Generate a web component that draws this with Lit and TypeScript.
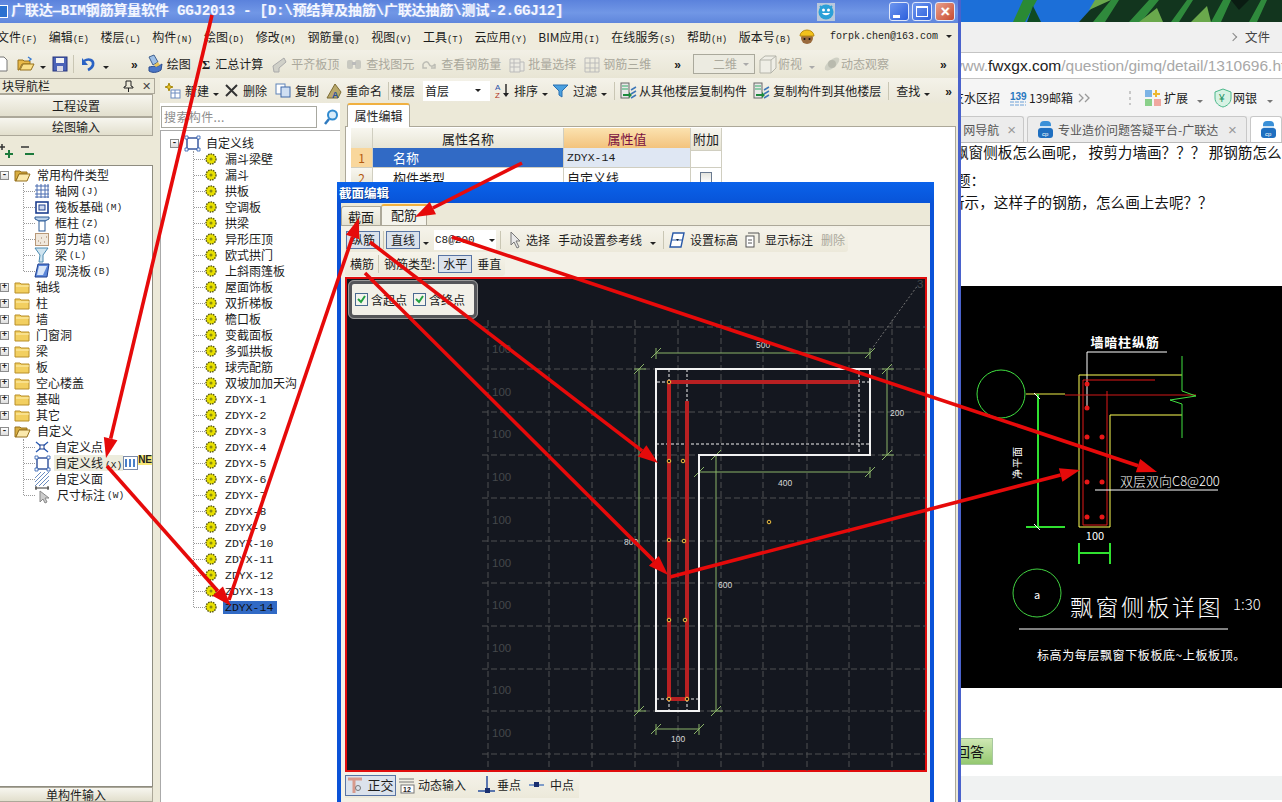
import { LitElement, html, svg, css } from 'lit';
import { customElement } from 'lit/decorators.js';

type Seg = [number, number, number, number];

// little svg wrapper so the icons stay short
const ic = (w: number, h: number, body: unknown) => html`<svg class="ic" width=${w} height=${h} viewBox="0 0 ${w} ${h}">${body}</svg>`;

const caret = html`<span class="caret"></span>`;
const more = html`<span class="more">»</span>`;

const icons = {
  doc: ic(13, 16, svg`<path d="M1 1h8l3 3v11H1z" fill="#fff" stroke="#777"/>`),
  folder: ic(18, 16, svg`<path d="M1 14V4h5l1 1h6v3H5l-3 6z" fill="#e9b949" stroke="#96701c"/><path d="M3 14l3-6h11l-3 6z" fill="#fbe08a" stroke="#96701c"/><path d="M11 1l3 2-2 2" fill="none" stroke="#3a7bd0" stroke-width="1.4"/>`),
  save: ic(16, 16, svg`<rect x="1" y="1" width="14" height="14" fill="#4b63b8" stroke="#26357c"/><rect x="4" y="2" width="8" height="5" fill="#f3f3f3"/><rect x="5" y="10" width="6" height="5" fill="#d9d9e6"/>`),
  undo: ic(15, 16, svg`<path d="M3 5c5-3 10-1 9 4-1 3-3 4-5 5" fill="none" stroke="#2a62c4" stroke-width="2.6"/><path d="M1 2v7h6z" fill="#2a62c4"/>`),
  draw: ic(18, 20, svg`<path d="M3 3l5-2 4 7-5 3z" fill="#9fc0e6" stroke="#40608f"/><path d="M3 13c4-1 9 0 13-3l-1 6c-4 3-9 3-12 1z" fill="#4a76c6" stroke="#2b4c8f"/><path d="M8 11l4-3 2 3-4 2z" fill="#e8c35a"/>`),
  sigma: html`<b class="sigma">Σ</b>`,
  greyA: ic(17, 17, svg`<path d="M2 10l11-8 2 4-7 6v4H3z" fill="#d0d0c8" stroke="#aaa"/>`),
  greyB: ic(16, 14, svg`<rect x="1" y="3" width="6" height="9" rx="2" fill="#c8c8c0"/><rect x="9" y="3" width="6" height="9" rx="2" fill="#c8c8c0"/><rect x="6" y="5" width="4" height="3" fill="#bbb"/>`),
  greyC: ic(15, 12, svg`<path d="M1 6c2-3 5-3 6 0s4 3 6 0M1 6v4h4M13 6v4H9" fill="none" stroke="#bdbdb5" stroke-width="1.5"/>`),
  greyD: ic(16, 17, svg`<path d="M1 3h10v13H1zM1 7h10M1 11h10M5 3v13M11 6h4v9h-4" fill="#ebeae2" stroke="#bbb"/>`),
  greyE: ic(16, 17, svg`<path d="M1 2h14v14H1zM1 7h14M1 12h14M6 2v14M11 2v14" fill="none" stroke="#bbb"/>`),
  cube: ic(19, 20, svg`<path d="M2 6l5-4h11v12l-5 5H2z" fill="#efeee6" stroke="#b5b5ab"/><path d="M2 6h11v13M13 6l5-4" fill="none" stroke="#b5b5ab"/>`),
  orbit: ic(18, 18, svg`<ellipse cx="9" cy="9" rx="9" ry="4" transform="rotate(-40 9 9)" fill="#cfd0c4"/><circle cx="9" cy="9" r="4" fill="#b9baae"/>`),
  addNew: ic(16, 16, svg`<path d="M4 0l1 3 3 1-3 1-1 3-1-3-3-1 3-1z" fill="#e8c020" stroke="#a88a10"/><rect x="6" y="7" width="9" height="8" fill="#fff" stroke="#6c8cc0"/><path d="M6 10h9M10 7v8" stroke="#6c8cc0"/>`),
  del: ic(13, 13, svg`<path d="M1 1l11 11M12 1L1 12" stroke="#333" stroke-width="2"/>`),
  copy: ic(16, 15, svg`<rect x="1" y="1" width="9" height="10" fill="#fff" stroke="#5f83b8"/><rect x="6" y="4" width="9" height="10" fill="#cfdff2" stroke="#3f68a8"/>`),
  rename: ic(16, 16, svg`<path d="M1 15L9 1l6 8-3 6z" fill="#b9a86a" stroke="#7d6c34"/><text x="6" y="15" font-size="9" font-weight="700" fill="#2850a0" font-family="Liberation Sans">A</text>`),
  sort: ic(15, 15, svg`<text x="0" y="7" font-size="8" fill="#2a4fa8" font-family="Liberation Sans">A</text><text x="0" y="15" font-size="8" fill="#b03020" font-family="Liberation Sans">Z</text><path d="M11 1v11" stroke="#222" stroke-width="1.4"/><path d="M8 10h6l-3 4z" fill="#222"/>`),
  funnel: ic(16, 14, svg`<path d="M0 1h15L9 7v6l-3-2V7z" fill="#4aa0e0" stroke="#2a70b0"/>`),
  copyFrom: ic(17, 18, svg`<rect x="1" y="1" width="8" height="15" fill="#e8e8e8" stroke="#666"/><path d="M2 4h6M2 7h6" stroke="#3a6"/><path d="M3 12h6v-2l3 3-3 3v-2H3z" fill="#1c8a3c"/><path d="M11 8l5-3M11 12l5-3M11 16l5-3" stroke="#3f78b8" stroke-width="1.5"/>`),
  select: ic(12, 18, svg`<path d="M1 1v13l3-3 3 6 2-1-3-6h4z" fill="#e8e8e8" stroke="#777"/>`),
  elev: ic(16, 16, svg`<path d="M4 1h11l-3 14H1z" fill="#fff" stroke="#2a5aa8" stroke-width="1.4"/><path d="M3 8h10" stroke="#2a5aa8"/><path d="M7 7l3 0-1.500 2z" fill="#123"/>`),
  label: ic(15, 16, svg`<rect x="1" y="4" width="8" height="11" fill="#fff" stroke="#555"/><path d="M3 1h11v10" fill="none" stroke="#555"/><path d="M3 8h4M3 11h4" stroke="#555"/>`),
  ortho: ic(16, 15, svg`<path d="M1 1h14M7 1v14" stroke="#d89a8c" stroke-width="3"/><circle cx="11" cy="10" r="2.500" fill="none" stroke="#777"/>`),
  dyn: ic(15, 16, svg`<path d="M0 2h15M0 5h15" stroke="#777"/><rect x="2" y="8" width="13" height="8" fill="#fff" stroke="#777"/><text x="4" y="15" font-size="7" font-weight="700" fill="#222" font-family="Liberation Sans">12</text>`),
  perp: ic(18, 18, svg`<path d="M9 0v15M0 15h17" stroke="#2a4f9f" stroke-width="1.500"/><rect x="7" y="12" width="5" height="5" fill="#1a2f6f"/>`),
  mid: ic(16, 8, svg`<path d="M0 4h15" stroke="#5a80c0" stroke-width="1.500"/><rect x="5" y="1" width="5" height="5" fill="#1a2f6f"/>`),
  closedFolder: ic(15, 13, svg`<path d="M0 2h5l1 1h8v9H0z" fill="#f2cf60" stroke="#b88e28"/><path d="M1 5h13" stroke="#fff2b8"/>`),
  openFolder: ic(16, 13, svg`<path d="M0 12V2h5l1 1h6v2H4L1 12z" fill="#d8ad40" stroke="#96701c"/><path d="M1 12l3-7h11l-3 7z" fill="#fbe9ac" stroke="#96701c"/>`),
  gear: ic(12, 12, svg`<circle cx="6" cy="6" r="5" fill="#e8e000" stroke="#545410" stroke-width="1.400" stroke-dasharray="1.500 1"/><circle cx="6" cy="6" r="1.500" fill="#8a8a10"/>`),
  curve: ic(15, 15, svg`<rect x="2" y="2" width="11" height="11" fill="none" stroke="#1d3f8f" stroke-width="1.300"/><path d="M0 0h3v3H0zM12 0h3v3h-3zM0 12h3v3H0zM12 12h3v3h-3z" fill="#fff" stroke="#2a5ab0" stroke-width=".8"/>`),
  grid: ic(14, 14, svg`<path d="M2 0v14M6 0v14M10 0v14M13 0v14M0 2h14M0 6h14M0 10h14M0 13h14" stroke="#4a6cb0"/>`),
  raft: ic(14, 13, svg`<rect x="1" y="1" width="12" height="11" fill="#fff" stroke="#1d3f8f" stroke-width="1.600"/><rect x="4" y="4" width="6" height="5" fill="#cdd8ee" stroke="#1d3f8f"/>`),
  column: ic(14, 15, svg`<path d="M0 1h14v2l-4 2H4L0 3z" fill="#b8cfe8" stroke="#2a5a98"/><rect x="4" y="5" width="6" height="10" fill="#fff" stroke="#2a5a98"/>`),
  wall: ic(14, 13, svg`<rect x=".5" y=".5" width="13" height="12" fill="#f0e8dc" stroke="#b89878"/><path d="M3 8h1M6 5h1M9 9h1M11 4h1M5 10h1" stroke="#9a7a60"/>`),
  beam: ic(14, 14, svg`<path d="M0 0h13L8 7v7H4l1-7z" fill="#cfe4f0" stroke="#4a8ab0"/>`),
  slab: ic(14, 14, svg`<path d="M3 0h11l-2 13H0z" fill="#5c86d8" stroke="#1d3f8f"/><path d="M4 2h8l-4 9H2z" fill="#d9e6f8"/>`),
  cross: ic(14, 12, svg`<path d="M1 1l12 10M13 1L1 11" stroke="#2a5ab0" stroke-width="1.300"/><rect x="5" y="4" width="4" height="4" fill="#fff" stroke="#1d3f8f"/>`),
  hatch: ic(14, 14, svg`<path d="M0 6l6-6M0 10l10-10M0 14L14 0M4 14L14 4M8 14l6-6" stroke="#6a8cc0"/>`),
  dimen: ic(16, 18, svg`<path d="M0 2h14M1 0v4M13 0v4" stroke="#333"/><path d="M5 5v11l3-3 2 4 2-1-2-4h4z" fill="#ccc" stroke="#888"/>`),
  cols: ic(15, 14, svg`<rect x=".5" y=".5" width="14" height="13" fill="#fff" stroke="#7a8aa8"/><path d="M3 3v8M7 3v8M11 3v8" stroke="#4a80c8" stroke-width="2"/>`),
  search: ic(16, 16, svg`<circle cx="9.500" cy="6" r="4.500" fill="#d8ecfb" stroke="#2f8ad0" stroke-width="2"/><path d="M6 10l-4 5" stroke="#2f7abf" stroke-width="2.500"/>`),
  helmet: ic(16, 17, svg`<circle cx="8" cy="10" r="6" fill="#9a6a3c"/><path d="M1 8a7 6 0 0 1 14 0z" fill="#f2c21c" stroke="#b88a10"/><circle cx="5.500" cy="11" r="1" fill="#111"/><circle cx="10.500" cy="11" r="1" fill="#111"/>`),
  smile: ic(18, 18, svg`<rect width="18" height="18" fill="#b8c8dc"/><circle cx="9" cy="9" r="7.500" fill="#2aa0d8"/><path d="M3 3l2 2M15 3l-2 2" stroke="#2aa0d8" stroke-width="2"/><circle cx="6.500" cy="7" r="1.500" fill="#fff"/><circle cx="11.500" cy="7" r="1.500" fill="#fff"/><path d="M5 10c2 3 6 3 8 0z" fill="#fff"/>`),
  ext: ic(16, 16, svg`<rect x="0" y="0" width="7" height="7" fill="#7db4e6"/><path d="M12 0v3h3v2h-3v2h-2V5H8V3h2V0z" fill="#eeb830"/><rect x="0" y="9" width="7" height="7" fill="#8ad08a"/><rect x="9" y="9" width="7" height="7" fill="#f0a8a0"/>`),
  shield: ic(16, 18, svg`<path d="M8 0l8 3v6c0 5-4 8-8 9-4-1-8-4-8-9V3z" fill="#d8f2e4" stroke="#4ab88a"/><text x="4" y="13" font-size="10" fill="#1a9060" font-family="Liberation Sans">¥</text>`),
  m139: ic(16, 16, svg`<text x="0" y="10" font-size="10" font-weight="700" fill="#2a78c0" font-family="Liberation Sans">139</text><path d="M0 12h16M0 15h16" stroke="#6aa0d8" stroke-dasharray="4 1"/>`),
  tabIcon: ic(15, 17, svg`<rect x="2" y="0" width="11" height="9" rx="4" fill="#3a90d8"/><rect x="0" y="7" width="15" height="10" rx="3" fill="#1f6fc0"/><path d="M2 6h11" stroke="#fff" stroke-width="1.500"/><text x="4" y="15" font-size="6" fill="#fff" font-family="Liberation Sans">cp</text>`),
  chevrons: ic(12, 10, svg`<path d="M1 1l4 4-4 4M7 1l4 4-4 4" fill="none" stroke="#999" stroke-width="1.300"/>`),
  pin: ic(9, 11, svg`<path d="M2 0h5v5l2 1v1H0V6l2-1zM4.500 7v4" fill="none" stroke="#222"/>`),
};

const menuItems: [string, string][] = [
  ['文件', 'F'], ['编辑', 'E'], ['楼层', 'L'], ['构件', 'N'], ['绘图', 'D'], ['修改', 'M'], ['钢筋量', 'Q'],
  ['视图', 'V'], ['工具', 'T'], ['云应用', 'Y'], ['BIM应用', 'I'], ['在线服务', 'S'], ['帮助', 'H'], ['版本号', 'B'],
];

// [space before, content]
type Tool = [number, unknown];
const tb1: Tool[] = [
  [-5, icons.doc], [9, icons.folder], [5, caret], [6, icons.save], [5, html`<span class="sep"></span>`], [7, icons.undo], [7, caret], [22, more],
  [8, icons.draw], [3, '绘图'], [11, icons.sigma], [5, '汇总计算'], [8, icons.greyA], [3, html`<span class="off">平齐板顶</span>`],
  [7, icons.greyB], [4, html`<span class="off">查找图元</span>`], [8, icons.greyC], [4, html`<span class="off">查看钢筋量</span>`],
  [8, icons.greyD], [3, html`<span class="off">批量选择</span>`], [8, icons.greyE], [3, html`<span class="off">钢筋三维</span>`], [23, more],
  [12, html`<span class="combo-off"><span class="off">二维</span><span class="caret dim"></span></span>`], [3, icons.cube], [1, html`<span class="off">俯视</span>`],
  [7, html`<span class="caret dim"></span>`], [8, icons.orbit], [0, html`<span class="off">动态观察</span>`], [51, more],
];

const tb2: Tool[] = [
  [5, icons.addNew], [4, '新建'], [4, caret], [6, icons.del], [5, '删除'], [8, icons.copy], [4, '复制'], [7, icons.rename], [4, '重命名'],
  [6, html`<span class="sep"></span>`], [2, '楼层'], [8, html`<span class="floor">首层<span class="caret"></span></span>`], [5, icons.sort], [4, '排序'], [4, caret],
  [5, icons.funnel], [4, '过滤'], [4, caret], [7, html`<span class="sep"></span>`], [5, icons.copyFrom], [2, '从其他楼层复制构件'], [6, icons.copyFrom], [3, '复制构件到其他楼层'],
  [7, html`<span class="sep"></span>`], [7, '查找'], [4, caret], [15, more],
];

const navKids: [unknown, string, string][] = [
  [icons.grid, '轴网', 'J'], [icons.raft, '筏板基础', 'M'], [icons.column, '框柱', 'Z'],
  [icons.wall, '剪力墙', 'Q'], [icons.beam, '梁', 'L'], [icons.slab, '现浇板', 'B'],
];
const navFolders = ['轴线', '柱', '墙', '门窗洞', '梁', '板', '空心楼盖', '基础', '其它'];
const listKids = ['漏斗梁壁', '漏斗', '拱板', '空调板', '拱梁', '异形压顶', '欧式拱门', '上斜雨篷板', '屋面饰板', '双折梯板', '檐口板', '变截面板', '多弧拱板', '球壳配筋', '双坡加加天沟',
  ...Array.from({ length: 14 }, (_, i) => `ZDYX-${i + 1}`)];

const arrows: Seg[] = [
  [212, 15, 106, 458], [107, 466, 231, 606], [229, 600, 359, 218], [522, 163, 415, 217],
  [452, 237, 1157, 472], [370, 242, 658, 463], [365, 273, 668, 575], [670, 577, 1080, 470],
];

const arrow = ([x1, y1, x2, y2]: Seg) => {
  const len = Math.hypot(x2 - x1, y2 - y1);
  const ux = (x2 - x1) / len, uy = (y2 - y1) / len;
  const bx = x2 - ux * 20, by = y2 - uy * 20;
  const wx = -uy * 7, wy = ux * 7;
  return svg`<line x1=${x1} y1=${y1} x2=${bx} y2=${by} stroke="#e60a0a" stroke-width="3.6"/>
    <polygon points="${x2},${y2} ${bx + wx},${by + wy} ${bx - wx},${by - wy}" fill="#e60a0a"/>`;
};

const gridX = [488, 549, 592, 635, 678, 721, 763, 807, 849, 892];
const gridY = [327, 369, 412, 455, 498, 541, 583, 626, 669, 711, 754];
const gridLabels = [349, 392, 434, 477, 520, 563, 605, 648, 690, 733];
const dots: [number, number][] = [[669, 382], [669, 461], [683, 461], [669, 540], [684, 541], [669, 620], [685, 620], [669, 699], [687, 699], [769, 522]];

const dim = (x1: number, y1: number, x2: number, y2: number) => svg`
  <line x1=${x1} y1=${y1} x2=${x2} y2=${y2}/>
  <path d="M${x1 - 5} ${y1 + 5}L${x1 + 5} ${y1 - 5}M${x2 - 5} ${y2 + 5}L${x2 + 5} ${y2 - 5}"/>
  ${x1 === x2
    ? svg`<path d="M${x1 - 5} ${y1}H${x1 + 7}M${x2 - 5} ${y2}H${x2 + 7}"/>`
    : svg`<path d="M${x1} ${y1 - 5}V${y1 + 6}M${x2} ${y2 - 5}V${y2 + 6}"/>`}`;

const section = svg`
  ${gridX.map(x => svg`<line class="gline" x1=${x} y1="320" x2=${x} y2="771"/>`)}
  ${gridY.map(y => svg`<line class="gline" x1="482" y1=${y} x2="926" y2=${y}/>`)}
  ${gridLabels.map(y => svg`<text class="gl" x="492" y=${y + 4}>100</text>`)}
  <path class="thin" d="M871 350L918 285"/>
  <text class="gl" x="917" y="288">3</text>
  <g class="dim">
    ${dim(656, 353, 870, 353)}${dim(887, 369, 887, 455)}${dim(699, 472, 870, 472)}
    ${dim(639, 369, 639, 711)}${dim(716, 455, 716, 711)}${dim(656, 729, 699, 729)}
  </g>
  <path class="cut" d="M657 382H870M669 369V382M687 369V401M656 444H870M859 369V455M656 699H698M669 699V711M687 699V711"/>
  <path class="outline" d="M656 369H870V455H699V711H656Z"/>
  <path class="bar" d="M859 382H669V699H687V401"/>
  ${dots.map(([x, y]) => svg`<circle class="dot" cx=${x} cy=${y} r="1.800"/>`)}
  <text class="dl" x="756" y="348">500</text><text class="dl" x="890" y="416">200</text>
  <text class="dl" x="778" y="486">400</text><text class="dl" x="624" y="545">800</text>
  <text class="dl" x="718" y="588">600</text><text class="dl" x="671" y="742">100</text>
`;

const detail = svg`
  <rect x="0" y="0" width="321" height="402" fill="#000"/>
  <g transform="translate(-961 -286)">
    <text class="w" x="1125" y="347" text-anchor="middle" font-size="13" font-weight="700" letter-spacing="0.800">墙暗柱纵筋</text>
    <path d="M1167 352H1087V408" stroke="#fff" fill="none"/>
    <path d="M1182 375H1079V527H1110V415H1182" stroke="#ffff55" fill="none"/>
    <path d="M1155 380H1083V525H1107V391" stroke="#e01818" fill="none"/>
    <path d="M1065 395H1196" stroke="#d01818"/>
    <path d="M1026 394H1065" stroke="#a0a030" stroke-width="1.500"/>
    <path d="M1182 356V391L1196 396 1170 400 1182 404V438" stroke="#40e040" fill="none"/>
    <circle cx="1001" cy="394" r="24" stroke="#40e040" fill="none"/>
    <path d="M1038 394V527" stroke="#30e030" stroke-width="2"/>
    <path d="M1026 527H1065" stroke="#30e030" stroke-width="2"/>
    <path d="M1034 393l6 6M1034 524l6 6" stroke="#fff"/>
    ${[[1087, 384], [1087, 408], [1087, 437], [1102, 437], [1087, 482], [1102, 482], [1087, 517], [1102, 517]].map(([x, y]) => svg`<circle cx=${x} cy=${y} r="2.500" fill="#e81818"/>`)}
    <text class="w" transform="translate(1021 479) rotate(-90)" font-size="10" letter-spacing="1">净平面</text>
    <text class="w" x="1120" y="486" font-size="13" font-weight="300">双层双向C8@200</text>
    <path d="M1095 490H1218" stroke="#fff"/>
    <text class="w" x="1095" y="540" text-anchor="middle" font-size="11" font-family="Liberation Serif">100</text>
    <path d="M1079 553H1110" stroke="#30e030" stroke-width="2"/>
    <path d="M1079 543V564M1110 543V564" stroke="#30e030" stroke-width="2"/>
    <circle cx="1037" cy="593" r="24" stroke="#40d040" fill="none"/>
    <text class="w" x="1037" y="599" text-anchor="middle" font-size="11">a</text>
    <text class="w" x="1070" y="616" font-size="23" font-weight="200" letter-spacing="2.500">飘窗侧板详图</text>
    <text class="w" x="1233" y="610" font-size="15" font-weight="200">1:30</text>
    <path d="M1019 629H1228" stroke="#fff"/>
    <text class="w" x="1037" y="660" font-size="12" letter-spacing="0.600">标高为每层飘窗下板板底~上板板顶。</text>
  </g>
`;

@customElement('app-root')
export class AppRoot extends LitElement {
  static styles = css`
    :host {
      display: block;
      position: relative;
      width: 1282px;
      height: 802px;
      overflow: hidden;
      background: #fff;
      font: 12px/16px "Noto Sans CJK SC", "Liberation Sans", sans-serif;
      color: #1c1c1c;
    }
    .ic { display: block; flex: none; overflow: visible; }
    .sep { display: block; width: 1px; height: 18px; background: #c9c6b4; }
    .off { color: #aaa89c; }
    .caret { display: inline-block; width: 0; height: 0; border: 3px solid transparent; border-top: 3px solid #222; border-bottom: 0; }
    .caret.dim { border-top-color: #aaa; }
    .caret.soft { border-top-color: #777; }
    .more { font: 700 12px/10px "Liberation Sans", sans-serif; margin-top: -8px; }
    .sigma { font: 700 13px "Liberation Serif", serif; }
    .slot { display: block; flex: none; }

    /* browser window behind */
    .browser { position: absolute; left: 958px; top: 0; width: 324px; height: 802px; display: flex; flex-direction: column; overflow: hidden; padding-left: 3px; box-sizing: border-box; }
    .wall { display: block; flex: none; }
    .b-title { height: 30px; flex: none; background: #f0f0f0; display: flex; align-items: center; justify-content: flex-end; gap: 9px; padding-right: 12px; font-size: 12.500px; color: #444; border-bottom: 1px solid #c4c4c4; }
    .chev { width: 5px; height: 5px; border-top: 1px solid #888; border-right: 1px solid #888; transform: rotate(45deg); }
    .addr { height: 25px; flex: none; background: #fff; display: flex; align-items: center; white-space: nowrap; font: 15.500px "Liberation Sans", sans-serif; color: #a8a8a8; border-bottom: 1px solid #c4c4c4; overflow: hidden; }
    .addr span { margin-left: -10px; }
    .addr b { font-weight: 400; color: #222; }
    .marks { height: 37px; flex: none; background: #f5f5f5; display: flex; align-items: center; white-space: nowrap; }
    .dots { display: block; width: 2px; height: 14px; background: repeating-linear-gradient(#c8c8c8 0 3px, transparent 3px 6px); }
    .tabs { height: 26px; flex: none; background: #f0f0f0; display: flex; align-items: flex-end; gap: 3px; border-bottom: 1px solid #bbb; white-space: nowrap; }
    .tab { height: 26px; box-sizing: border-box; display: flex; align-items: center; border: 1px solid #c8c8c8; border-bottom: 0; border-radius: 3px 3px 0 0; background: #ececec; color: #555; flex: none; overflow: hidden; }
    .tab.first { width: 63px; border-left: 0; border-radius: 0 3px 0 0; justify-content: flex-end; gap: 8px; padding-right: 7px; }
    .tab.mid { width: 220px; padding-left: 10px; gap: 5px; }
    .tab.mid .t { width: 162px; overflow: hidden; margin-right: 3px; }
    .tab.cur { flex: 1; background: #fff; padding-left: 10px; }
    .x { color: #999; font: 15px "Liberation Sans", sans-serif; }
    .page { flex: 1; display: flex; flex-direction: column; background: #fff; font-size: 14.600px; line-height: 22px; color: #111; white-space: nowrap; overflow: hidden; }
    .page p { margin: 0; flex: none; }
    .page .l1 { margin: -1px 0 0 -7px; line-height: 20px; }
    .page .l2 { margin: 7px 0 0 -5px; }
    .page .l3 { margin: 0 0 0 -11px; }
    .cad { display: block; margin-top: 73px; flex: none; }
    .ans { margin-top: 50px; width: 32px; height: 27px; flex: none; box-sizing: border-box; display: flex; justify-content: flex-end; background: linear-gradient(#cfe8b4, #94c870); border: 1px solid #a8c8a0; border-left: 0; font-size: 14px; line-height: 25px; padding-right: 8px; overflow: hidden; }
    .band { margin-top: 11px; height: 24px; flex: none; background: #f0f2f2; }

    /* main application window */
    .main { position: absolute; left: 0; top: 0; width: 961px; height: 802px; box-sizing: border-box; border-right: 3px solid #4a62cc; background: #ece9d8; display: flex; flex-direction: column; }
    .title { height: 23px; flex: none; display: flex; align-items: center; background: linear-gradient(#5b82dc, #7197e6 55%, #5f86dc); color: #f4f6ff; white-space: nowrap; position: relative; padding-left: 11px; font: 700 14px/23px "Liberation Mono", "Noto Sans CJK SC", monospace; letter-spacing: -0.150px; text-shadow: 1px 0 0 rgba(255, 255, 255, .25); }
    .appicon { width: 8px; height: 13px; margin-left: -11px; margin-right: 3px; background: #2a70d0; border: 1px solid #fff; border-left: 0; box-sizing: border-box; }
    .winbtns { margin-left: auto; display: flex; align-items: center; padding-right: 3px; }
    .smile { margin-right: 51px; }
    .wb { width: 20px; height: 19px; box-sizing: border-box; border: 1px solid #dfe7fa; border-radius: 3px; background: linear-gradient(135deg, #6d96ee, #2d5fdc); margin-left: 3px; display: flex; align-items: center; justify-content: center; }
    .wb.close { width: 20px; background: linear-gradient(135deg, #e8a08c, #c84a30); color: #fff; font: 700 16px/16px "Liberation Sans", sans-serif; }
    .wb i { display: block; }
    .wb .mn { width: 7px; height: 3px; background: #fff; margin: 9px 6px 0 0; }
    .wb .mx { width: 12px; height: 11px; box-sizing: border-box; border: 1px solid #fff; border-top-width: 2px; }

    .menu { height: 27px; flex: none; display: flex; align-items: center; gap: 11.500px; margin-left: -3px; background: #efecde; white-space: nowrap; }
    .menu .acc { font: 9px "Liberation Mono", monospace; }
    .hat { margin-left: -3px; }
    .email { font: 10px "Liberation Mono", monospace; margin-left: 3px; }
    .menu > .caret { margin-left: -3px; }
    .tb { display: flex; align-items: center; white-space: nowrap; flex: none; }
    .tb1 { height: 28px; background: linear-gradient(#f2f0e6, #e8e5d4); }
    .combo-off { display: flex; align-items: center; justify-content: flex-end; gap: 6px; box-sizing: border-box; width: 62px; height: 20px; padding-right: 5px; border: 1px solid #aaa99c; background: #ecebe1; }
    .tb2 { height: 25px; background: linear-gradient(#f4f2e9, #ebe8d9); }
    .floor { display: flex; align-items: center; justify-content: space-between; box-sizing: border-box; width: 67px; height: 20px; background: #fff; padding: 0 9px 0 2px; }

    .work { flex: 1; display: flex; min-height: 0; }
    .nav { width: 155px; flex: none; display: flex; flex-direction: column; }
    .nav-h { height: 16px; flex: none; box-sizing: border-box; border: 1px solid #aca899; border-left: 0; display: flex; align-items: center; padding-left: 2px; background: #ece9d8; }
    .nav-h span { margin-right: auto; }
    .nav-h .cl { margin: 0 3px 0 9px; font: 11px "Liberation Sans", sans-serif; color: #444; }
    .btn { box-sizing: border-box; display: flex; align-items: center; justify-content: center; background: linear-gradient(#f7f6ef, #e2dfcd); border: 1px solid #aca899; border-left: 0; width: 153px; flex: none; }
    .btn.a { height: 23px; }
    .btn.b { height: 19px; }
    .btn.c { height: 15px; }
    .pm { height: 29px; flex: none; display: flex; align-items: center; gap: 7px; }
    .tree-l { flex: 1; width: 153px; box-sizing: border-box; background: #fff; border: 1px solid #8e8c80; border-left: 0; padding-top: 1px; overflow: hidden; }
    .row { height: 16px; display: flex; align-items: center; white-space: nowrap; }
    .row .acc { font: 9.500px "Liberation Mono", monospace; margin-left: 2px; }
    .exp { position: relative; flex: none; box-sizing: border-box; width: 9px; height: 9px; border: 1px solid #8c8c8c; background: linear-gradient(#fff, #ddd); font: 700 9px/7px "Liberation Mono", monospace; text-align: center; color: #222; }
    .nav .exp { margin-right: 6px; }
    .stub { flex: none; height: 0; border-top: 1px dotted #999; }
    .kids { border-left: 1px dotted #999; margin-bottom: 8px; }
    .nk { margin-left: 23px; }
    .nk .stub { width: 11px; }
    .nk .row .ic { margin-right: 6px; }
    .rootrow .ic { margin-right: 6px; }
    .sel { background: #edecdd; padding: 0 1px; margin-left: -2px; }
    .newtag { display: block; flex: none; background: #f8e878; color: #222; font: 700 10px/10px "Liberation Sans", sans-serif; width: 15px; overflow: hidden; margin: -6px 0 0 -6px; }

    .gut { width: 5px; flex: none; }
    .rt { flex: 1; display: flex; flex-direction: column; min-width: 0; }
    .panes { flex: 1; display: flex; min-height: 0; }
    .list { width: 180px; flex: none; display: flex; flex-direction: column; }
    .search { height: 27px; flex: none; display: flex; align-items: center; gap: 6px; background: #fff; }
    .search div { box-sizing: border-box; width: 156px; height: 22px; margin-left: 1px; margin-top: 1px; border: 1px solid #a8a8a0; color: #8c8c8c; padding-left: 2px; line-height: 20px; letter-spacing: .400px; }
    .tree-r { flex: 1; background: #fff; border-left: 1px solid #aaa; border-top: 1px solid #aaa; padding: 4px 0 0 9px; overflow: hidden; }
    .tree-r .exp { margin-right: 6px; }
    .tree-r > .row .ic { margin-right: 6px; }
    .lk { margin-left: 23px; }
    .lk .stub { width: 11px; }
    .lk .ic { margin-right: 8px; }
    .lk .m { font: 11.500px "Liberation Mono", monospace; }
    .lk .cur { background: #316ac5; color: #111; padding: 0 4px 0 2px; margin-left: -2px; }

    .props { flex: 1; margin-left: 5px; display: flex; flex-direction: column; }
    .ptabs { height: 23px; flex: none; background: #ece9d8; }
    .ptab { box-sizing: border-box; width: 63px; height: 24px; margin-left: 2px; background: #fff; border: 1px solid #aca899; border-top: 2px solid #f0b040; border-bottom: 0; border-radius: 3px 3px 0 0; text-align: center; line-height: 21px; position: relative; z-index: 1; }
    .ptable { flex: 1; background: #fff; border: 1px solid #aca899; border-bottom: 0; margin-right: 2px; padding: 0 0 0 5px; }
    .ptgrid { display: grid; grid-template-columns: 22px 191px 127px 31px; grid-auto-rows: 20px; width: 371px; margin-top: 1px; }
    .ptgrid > div { box-sizing: border-box; border-right: 1px solid #d0cec0; border-bottom: 1px solid #d0cec0; display: flex; align-items: center; }
    .ptgrid .hd { height: 23px; background: linear-gradient(#f8f7f0, #e6e3d2); justify-content: center; font-size: 13px; }
    .ptgrid .hd.v { background: linear-gradient(#fbe2b0, #f2c078); color: #7a1040; }
    .ptgrid .nm { background: #316ac5; color: #fff; padding-left: 20px; font-size: 13px; }
    .ptgrid .val { background: #dfe7f3; padding-left: 3px; font: 11.500px "Liberation Mono", monospace; }
    .ptgrid .idx { justify-content: center; background: linear-gradient(#f8f7f0, #e6e3d2); color: #b45a10; }
    .ptgrid .idx.on { background: #f9d79c; }
    .ptgrid .nm2 { padding-left: 20px; font-size: 13px; }
    .ptgrid .val2 { padding-left: 3px; font-size: 13px; }
    .ptgrid .chk { justify-content: center; }
    .box { width: 12px; height: 12px; box-sizing: border-box; border: 1px solid #6a7a90; background: linear-gradient(#e4e4de, #fff); }

    /* dialog */
    .dlg { position: absolute; left: 337px; top: 182px; width: 597px; height: 620px; box-sizing: border-box; border: solid #0a52d8; border-width: 0 4px; background: #ece9d8; display: flex; flex-direction: column; }
    .dlg-t { height: 21px; flex: none; margin: 0 -4px; padding-left: 2px; background: linear-gradient(#0a62ea, #0854d8); color: #fff; font-weight: 700; font-size: 12.500px; line-height: 22px; text-shadow: 1px 1px 0 #083a90; }
    .dtabs { height: 22px; flex: none; display: flex; align-items: flex-end; }
    .dtab { box-sizing: border-box; width: 40px; height: 19px; background: linear-gradient(#f7f6ef, #e4e1d0); border: 1px solid #aca899; border-bottom: 0; border-radius: 3px 0 0 0; text-align: center; line-height: 20px; font-size: 13px; }
    .dtab.on { width: 46px; height: 21px; background: #f5f4ec; border-top: 2px solid #f0b040; line-height: 18px; }
    .dpanel { flex: 1; display: flex; flex-direction: column; border-top: 1px solid #aca899; background: #f3f1e7; padding: 2px 3px 2px 4px; min-height: 0; }
    .dt { height: 24px; flex: none; display: flex; align-items: center; white-space: nowrap; }
    .dt1 { background: linear-gradient(#f5f3ea, #ece9da); margin-right: 79px; border-radius: 3px; }
    .dt2 { background: linear-gradient(#f5f3ea, #ece9da); width: 160px; border-radius: 3px; }
    .pressed { box-sizing: border-box; width: 34px; height: 18px; display: flex; align-items: center; justify-content: center; border: 1px solid #5874a4; background: #dbe2ec; }
    .cin { display: flex; align-items: center; justify-content: space-between; box-sizing: border-box; width: 62px; height: 20px; background: #fff; padding: 0 1px; font: 11px "Liberation Mono", monospace; margin-left: 4px; }
    .canvas { position: relative; flex: none; width: 582px; height: 495px; box-sizing: border-box; border: 2px solid #e00d0d; background: #14171f; margin-top: 1px; }
    .canvas > svg { position: absolute; left: -2px; top: -2px; }
    .canvas .gline { stroke: #4e5053; stroke-dasharray: 6 3; stroke-width: 1; }
    .canvas .gl { fill: #44474b; font: 11.500px "Liberation Sans", sans-serif; }
    .canvas .dl { fill: #d8d8d8; font: 8.500px "Liberation Sans", sans-serif; }
    .canvas .thin { stroke: #777; stroke-dasharray: 2 2; fill: none; }
    .canvas .dim { stroke: #8ab468; fill: none; }
    .canvas .cut { stroke: #f0f0f0; stroke-dasharray: 3 2; fill: none; }
    .canvas .outline { stroke: #f2f2f2; stroke-width: 2; fill: none; }
    .canvas .bar { stroke: #b82022; stroke-width: 4; fill: none; }
    .canvas .dot { fill: #1a1a1a; stroke: #f0c040; stroke-width: 1; }
    .float { position: absolute; left: 1px; top: 1px; box-sizing: border-box; width: 130px; height: 39px; border: 4px solid #55565a; border-radius: 6px; background: #f2f0e8; display: flex; align-items: center; padding-left: 3px; gap: 6px; outline: 1px solid #9a9a9a; outline-offset: -1px; }
    .float label { display: flex; align-items: center; gap: 3px; }
    .st { flex: none; height: 26px; display: flex; align-items: center; }
    .st-tb { display: flex; align-items: center; height: 26px; background: linear-gradient(#f5f3ea, #ece9da); padding-right: 5px; white-space: nowrap; }
    .st-on { box-sizing: border-box; width: 51px; height: 21px; display: flex; align-items: center; justify-content: center; gap: 4px; border: 1px solid #5874a4; background: #dbe2ec; font-size: 13px; }

    .overlay { position: absolute; left: 0; top: 0; pointer-events: none; }
    .detail .w { fill: #fff; font-family: "Noto Sans CJK SC", sans-serif; }
  `;

  private _tools(list: Tool[]) {
    return list.map(([gap, body]) => html`<span class="slot" style="margin-left:${gap}px">${body}</span>`);
  }

  private _nav() {
    return html`
      <div class="nav">
        <div class="nav-h"><span>块导航栏</span>${icons.pin}<i class="cl">✕</i></div>
        <div class="btn a">工程设置</div>
        <div class="btn b">绘图输入</div>
        <div class="pm">
          ${ic(14, 14, svg`<path d="M-2 3H5M2 0V6" stroke="#333" stroke-width="1.500"/><path d="M5 10h8M9 6v8" stroke="#1c7a3c" stroke-width="2"/>`)}
          ${ic(14, 14, svg`<path d="M0 3h8" stroke="#333" stroke-width="1.500"/><path d="M4 10h9" stroke="#1c7a3c" stroke-width="2"/>`)}
        </div>
        <div class="tree-l">
          <div class="row rootrow"><span class="exp">-</span>${icons.openFolder}常用构件类型</div>
          <div class="kids nk" style="height:${navKids.length * 16 - 8}px">
            ${navKids.map(([i, t, k]) => html`<div class="row"><span class="stub"></span>${i}${t}<span class="acc">(${k})</span></div>`)}
          </div>
          ${navFolders.map(f => html`<div class="row rootrow"><span class="exp">+</span>${icons.closedFolder}${f}</div>`)}
          <div class="row rootrow"><span class="exp">-</span>${icons.openFolder}自定义</div>
          <div class="kids nk" style="height:${4 * 16 - 8}px">
            <div class="row"><span class="stub"></span>${icons.cross}自定义点</div>
            <div class="row"><span class="stub"></span>${icons.curve}<span class="sel">自定义线<span class="acc">(X)</span></span>${icons.cols}<span class="newtag">NE</span></div>
            <div class="row"><span class="stub"></span>${icons.hatch}自定义面</div>
            <div class="row"><span class="stub"></span>${icons.dimen}尺寸标注<span class="acc">(W)</span></div>
          </div>
        </div>
        <div class="btn c">单构件输入</div>
      </div>`;
  }

  private _list() {
    return html`
      <div class="list">
        <div class="search"><div>搜索构件...</div>${icons.search}</div>
        <div class="tree-r">
          <div class="row"><span class="exp">-</span>${icons.curve}自定义线</div>
          <div class="kids lk" style="height:${listKids.length * 16 - 8}px">
            ${listKids.map(k => html`<div class="row"><span class="stub"></span>${icons.gear}<span class="${k.startsWith('ZDYX') ? 'm' : ''} ${k === 'ZDYX-14' ? 'cur' : ''}">${k}</span></div>`)}
          </div>
        </div>
      </div>`;
  }

  private _props() {
    return html`
      <div class="props">
        <div class="ptabs"><div class="ptab">属性编辑</div></div>
        <div class="ptable">
          <div class="ptgrid">
            <div class="hd"></div><div class="hd">属性名称</div><div class="hd v">属性值</div><div class="hd">附加</div>
            <div class="idx on">1</div><div class="nm">名称</div><div class="val">ZDYX-14</div><div></div>
            <div class="idx">2</div><div class="nm2">构件类型</div><div class="val2">自定义线</div><div class="chk"><span class="box"></span></div>
          </div>
        </div>
      </div>`;
  }

  private _dialog() {
    const tick = ic(13, 13, svg`<rect x=".5" y=".5" width="12" height="12" fill="#f4f4ee" stroke="#4a6a90"/><path d="M3 6l3 3 4-6" fill="none" stroke="#22a040" stroke-width="2"/>`);
    const dt1: Tool[] = [
      [1, html`<span class="pressed">纵筋</span>`], [3, html`<span class="sep"></span>`], [2, html`<span class="pressed">直线</span>`], [3, caret],
      [1, html`<span class="cin">C8@200<span class="caret"></span></span>`], [4, html`<span class="sep"></span>`], [9, icons.select], [4, '选择'], [8, '手动设置参考线'], [8, caret],
      [7, html`<span class="sep"></span>`], [5, icons.elev], [5, '设置标高'], [7, icons.label], [5, '显示标注'], [8, html`<span class="off">删除</span>`],
    ];
    const dt2: Tool[] = [
      [5, '横筋'], [4, html`<span class="sep"></span>`], [5, '钢筋类型:'], [3, html`<span class="pressed">水平</span>`], [5, '垂直'],
    ];
    return html`
      <div class="dlg">
        <div class="dlg-t">截面编辑</div>
        <div class="dtabs"><div class="dtab">截面</div><div class="dtab on">配筋</div></div>
        <div class="dpanel">
          <div class="dt dt1">${this._tools(dt1)}</div>
          <div class="dt dt2">${this._tools(dt2)}</div>
          <div class="canvas">
            <svg width="582" height="495" viewBox="345 277 582 495">${section}</svg>
            <div class="float"><label>${tick}含起点</label><label>${tick}含终点</label></div>
          </div>
          <div class="st">
            <div class="st-tb">
              <div class="st-on">${icons.ortho}正交</div>
              ${this._tools([[3, icons.dyn], [4, '动态输入'], [12, icons.perp], [1, '垂点'], [8, icons.mid], [5, '中点']])}
            </div>
          </div>
        </div>
      </div>`;
  }

  private _browser() {
    const softCaret = html`<span class="caret soft"></span>`;
    return html`
      <div class="browser">
        <svg class="wall" width="321" height="22" viewBox="0 0 321 22">
          <rect width="321" height="22" fill="#1c6fd8"/>
          <path d="M52 22L62 0h14L64 22z" fill="#2a8a34"/>
          <path d="M66 22L72 6l8 16z" fill="#0f4a22"/>
          <path d="M118 22L138 0h183v22z" fill="#12351e"/>
          <path d="M132 22L150 0h8l-14 22zM168 22L188 0h10l-18 22zM210 22L226 0h6l-14 22zM250 22L262 0h8l-10 22zM288 22L300 0h6l-10 22z" fill="#2f8a3c"/>
          <path d="M128 10L150 0h-16zM178 22L196 8l6 14zM230 22L246 6l4 16z" fill="#6aa84c"/>
          <path d="M270 0h18l-10 10z" fill="#0a1c12"/>
        </svg>
        <div class="b-title"><span class="chev"></span><span>文件</span></div>
        <div class="addr"><span>www.<b>fwxgx.com</b>/question/gimq/detail/1310696.html</span></div>
        <div class="marks">
          ${this._tools([[-9, '支水区招'], [10, icons.m139], [3, '139邮箱'], [5, icons.chevrons], [39, html`<span class="dots"></span>`], [14, icons.ext], [3, '扩展'], [9, softCaret], [12, icons.shield], [2, '网银'], [10, softCaret]])}
        </div>
        <div class="tabs">
          <div class="tab first"><span>网导航</span><span class="x">×</span></div>
          <div class="tab mid">${icons.tabIcon}<span class="t">专业造价问题答疑平台-广联达</span><span class="x">×</span></div>
          <div class="tab cur">${icons.tabIcon}</div>
        </div>
        <div class="page">
          <p class="l1">飘窗侧板怎么画呢， 按剪力墙画？？？ 那钢筋怎么</p>
          <p class="l2">题：</p>
          <p class="l3">所示，这样子的钢筋，怎么画上去呢？？</p>
          <svg class="cad detail" width="321" height="402" viewBox="0 0 321 402">${detail}</svg>
          <div class="ans"><span>回答</span></div>
          <div class="band"></div>
        </div>
      </div>`;
  }

  render() {
    return html`
      ${this._browser()}
      <div class="main">
        <div class="title">
          <span class="appicon"></span>
          <span>广联达—BIM钢筋算量软件 GGJ2013 - [D:\\预结算及抽筋\\广联达抽筋\\测试-2.GGJ12]</span>
          <span class="winbtns">
            <span class="smile">${icons.smile}</span>
            <span class="wb"><i class="mn"></i></span><span class="wb"><i class="mx"></i></span><span class="wb close">×</span>
          </span>
        </div>
        <div class="menu">
          ${menuItems.map(([t, k]) => html`<span>${t}<span class="acc">(${k})</span></span>`)}
          <span class="hat">${icons.helmet}</span>
          <span class="email">forpk.chen@163.com</span>
          <span class="caret"></span>
        </div>
        <div class="tb tb1">${this._tools(tb1)}</div>
        <div class="work">
          ${this._nav()}
          <div class="gut"></div>
          <div class="rt">
            <div class="tb tb2">${this._tools(tb2)}</div>
            <div class="panes">
              ${this._list()}
              ${this._props()}
            </div>
          </div>
        </div>
      </div>
      ${this._dialog()}
      <svg class="overlay" width="1282" height="802">${arrows.map(arrow)}</svg>
    `;
  }
}
